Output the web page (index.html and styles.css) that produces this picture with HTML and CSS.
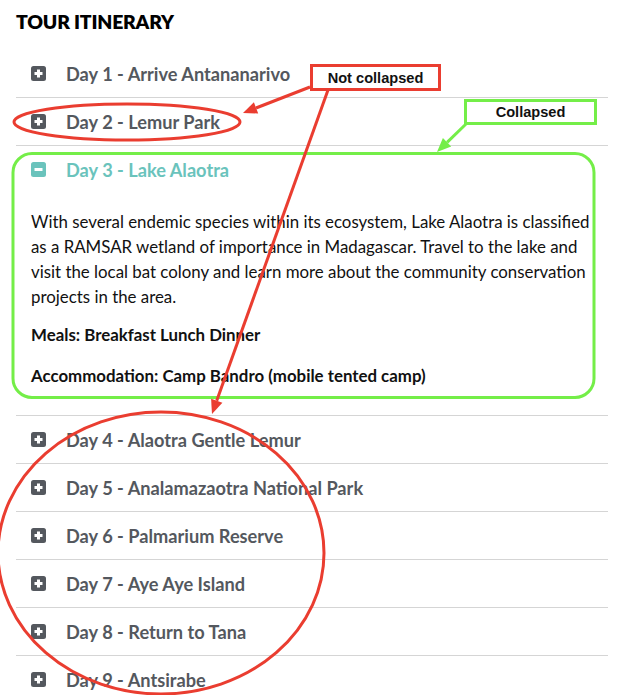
FILE: index.html
```html
<!DOCTYPE html>
<html>
<head>
<meta charset="utf-8">
<link rel="stylesheet" href="styles.css">
</head>
<body>
<div class="page">
  <h2 class="title">TOUR ITINERARY</h2>
  <ul class="itinerary">
    <li class="day"><div class="day-head"><svg class="icon" viewBox="0 0 15 15"><rect width="15" height="15" rx="2.5"/><path d="M7.5 3.5v8M3.5 7.5h8"/></svg>Day 1 - Arrive Antananarivo</div></li>
    <li class="day"><div class="day-head"><svg class="icon" viewBox="0 0 15 15"><rect width="15" height="15" rx="2.5"/><path d="M7.5 3.5v8M3.5 7.5h8"/></svg>Day 2 - Lemur Park</div></li>
    <li class="day open"><div class="day-head"><svg class="icon" viewBox="0 0 15 15"><rect width="15" height="15" rx="2.5"/><path d="M3.5 7.5h8"/></svg>Day 3 - Lake Alaotra</div>
      <div class="day-body">
        <p class="desc">With several endemic species within its ecosystem, Lake Alaotra is classified as a RAMSAR wetland of importance in Madagascar. Travel to the lake and visit the local bat colony and learn more about the community conservation projects in the area.</p>
        <p class="meta meals">Meals: Breakfast Lunch Dinner</p>
        <p class="meta accom">Accommodation: Camp Bandro (mobile tented camp)</p>
      </div>
    </li>
    <li class="day"><div class="day-head"><svg class="icon" viewBox="0 0 15 15"><rect width="15" height="15" rx="2.5"/><path d="M7.5 3.5v8M3.5 7.5h8"/></svg>Day 4 - Alaotra Gentle Lemur</div></li>
    <li class="day"><div class="day-head"><svg class="icon" viewBox="0 0 15 15"><rect width="15" height="15" rx="2.5"/><path d="M7.5 3.5v8M3.5 7.5h8"/></svg>Day 5 - Analamazaotra National Park</div></li>
    <li class="day"><div class="day-head"><svg class="icon" viewBox="0 0 15 15"><rect width="15" height="15" rx="2.5"/><path d="M7.5 3.5v8M3.5 7.5h8"/></svg>Day 6 - Palmarium Reserve</div></li>
    <li class="day"><div class="day-head"><svg class="icon" viewBox="0 0 15 15"><rect width="15" height="15" rx="2.5"/><path d="M7.5 3.5v8M3.5 7.5h8"/></svg>Day 7 - Aye Aye Island</div></li>
    <li class="day"><div class="day-head"><svg class="icon" viewBox="0 0 15 15"><rect width="15" height="15" rx="2.5"/><path d="M7.5 3.5v8M3.5 7.5h8"/></svg>Day 8 - Return to Tana</div></li>
    <li class="day"><div class="day-head"><svg class="icon" viewBox="0 0 15 15"><rect width="15" height="15" rx="2.5"/><path d="M7.5 3.5v8M3.5 7.5h8"/></svg>Day 9 - Antsirabe</div></li>
  </ul>

  <svg class="annot" viewBox="0 0 626 695" width="626" height="695">
    <rect class="g" x="13" y="153.5" width="581" height="244" rx="19"/>
    <ellipse class="r" cx="127" cy="122" rx="113" ry="18"/>
    <ellipse class="r" cx="161" cy="553" rx="163" ry="141"/>
    <line class="r" x1="310" y1="87" x2="256" y2="108"/>
    <polygon class="rf" points="243,113 258.2,113.5 253.9,102.3"/>
    <line class="r" x1="328" y1="90" x2="216.7" y2="400.8"/>
    <polygon class="rf" points="212,414 222.4,402.8 211.1,398.8"/>
    <line class="g" x1="466" y1="124" x2="447.1" y2="142.3"/>
    <polygon class="gf" points="437,152 451.2,146.6 442.9,138"/>
  </svg>
  <div class="label label-red">Not collapsed</div>
  <div class="label label-green">Collapsed</div>
</div>
</body>
</html>
```
FILE: styles.css
```css
html, body {
  margin: 0;
  padding: 0;
  background: #ffffff;
}
.page {
  position: relative;
  width: 626px;
  height: 695px;
  overflow: hidden;
  font-family: Lato, "Noto Sans", sans-serif;
}
.title {
  margin: 0;
  padding: 11px 0 0 16px;
  font-size: 19.4px;
  line-height: 22px;
  font-weight: 800;
  color: #000;
  letter-spacing: -0.2px;
}
.itinerary {
  list-style: none;
  margin: 17px 0 0 16px;
  padding: 0;
  width: 592px;
}
.day + .day {
  border-top: 1px solid #d5d5d5;
}
.day-head {
  display: flex;
  align-items: center;
  gap: 20px;
  height: 47px;
  padding-left: 15px;
  font-size: 18.2px;
  font-weight: 700;
  color: #54585e;
}
.icon {
  width: 15px;
  height: 15px;
  flex: none;
}
.icon rect {
  fill: #54585e;
}
.icon path {
  stroke: #fff;
  stroke-width: 3;
  fill: none;
}
.open .day-head {
  color: #6ac3bc;
}
.open .icon rect {
  fill: #6ac3bc;
}
.day-body {
  padding: 16px 4px 27px 15px;
  color: #111;
  font-size: 16.85px;
  line-height: 25px;
}
.day-body p {
  margin: 0;
}
.desc {
  font-weight: 400;
}
.meta {
  font-weight: 700;
}
.meals {
  margin-top: 13px !important;
}
.accom {
  margin-top: 16px !important;
}
.annot {
  position: absolute;
  left: 0;
  top: 0;
  pointer-events: none;
}
.annot .r {
  fill: none;
  stroke: #ea3d30;
  stroke-width: 3;
}
.annot .rf {
  fill: #ea3d30;
}
.annot .g {
  fill: none;
  stroke: #74ee48;
  stroke-width: 3;
}
.annot .gf {
  fill: #74ee48;
}
.label {
  position: absolute;
  box-sizing: border-box;
  font-family: "Liberation Sans", Arial, sans-serif;
  font-weight: 700;
  font-size: 14.6px;
  color: #111;
  background: #fff;
  display: flex;
  align-items: center;
  justify-content: center;
}
.label-red {
  left: 310px;
  top: 64px;
  width: 131px;
  height: 27px;
  border: 3px solid #ea3d30;
}
.label-green {
  left: 464px;
  top: 99px;
  width: 133px;
  height: 26px;
  border: 3px solid #74ee48;
}
```
